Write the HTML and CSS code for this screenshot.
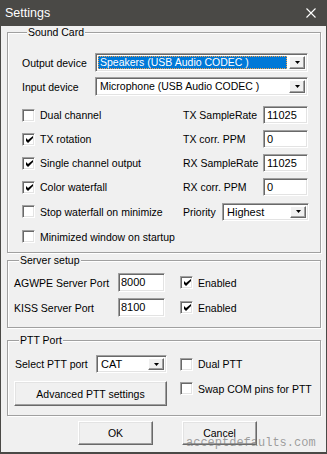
FILE: index.html
```html
<!DOCTYPE html>
<html>
<head>
  <title>Settings</title>
  <link rel="stylesheet" href="styles.css">
</head>
<body>
  <div class="window">
    <div class="titlebar">
      <span class="title">Settings</span>
      <svg class="close" width="10" height="10" viewBox="0 0 10 10">
        <path d="M0.5 0.5 L9.5 9.5 M9.5 0.5 L0.5 9.5" stroke="#ffffff" stroke-width="1.1" fill="none"/>
      </svg>
    </div>

    <div class="content">
      <fieldset class="group sound">
        <legend>Sound Card</legend>
        <div class="device-row">
          <span class="device-label">Output device</span>
          <div class="select focused">
            <span class="value"><span class="selected-text">Speakers (USB Audio CODEC )</span></span>
            <span class="drop"><svg width="5" height="3" viewBox="0 0 5 3"><path d="M0 0h5L2.5 3z" fill="#000"/></svg></span>
          </div>
        </div>
        <div class="device-row second">
          <span class="device-label">Input device</span>
          <div class="select">
            <span class="value">Microphone (USB Audio CODEC )</span>
            <span class="drop"><svg width="5" height="3" viewBox="0 0 5 3"><path d="M0 0h5L2.5 3z" fill="#000"/></svg></span>
          </div>
        </div>

        <div class="sound-grid">
          <label class="check"><span class="box"></span>Dual channel</label>
          <div class="field"><span>TX SampleRate</span><span class="input">11025</span></div>

          <label class="check"><span class="box checked"><svg width="7" height="7" viewBox="0 0 7 7"><path d="M0 2v3l2 2 5-5V-0L2 4z" fill="#000"/></svg></span>TX rotation</label>
          <div class="field"><span>TX corr. PPM</span><span class="input">0</span></div>

          <label class="check"><span class="box checked"><svg width="7" height="7" viewBox="0 0 7 7"><path d="M0 2v3l2 2 5-5V-0L2 4z" fill="#000"/></svg></span>Single channel output</label>
          <div class="field"><span>RX SampleRate</span><span class="input">11025</span></div>

          <label class="check"><span class="box checked"><svg width="7" height="7" viewBox="0 0 7 7"><path d="M0 2v3l2 2 5-5V-0L2 4z" fill="#000"/></svg></span>Color waterfall</label>
          <div class="field"><span>RX corr. PPM</span><span class="input">0</span></div>

          <label class="check"><span class="box"></span>Stop waterfall on minimize</label>
          <div class="field"><span>Priority</span>
            <div class="select priority">
              <span class="value">Highest</span>
              <span class="drop"><svg width="5" height="3" viewBox="0 0 5 3"><path d="M0 0h5L2.5 3z" fill="#000"/></svg></span>
            </div>
          </div>

          <label class="check wide"><span class="box"></span>Minimized window on startup</label>
        </div>
      </fieldset>

      <fieldset class="group server">
        <legend>Server setup</legend>
        <div class="server-row">
          <span class="server-label">AGWPE Server Port</span>
          <span class="input port">8000</span>
          <label class="check"><span class="box checked"><svg width="7" height="7" viewBox="0 0 7 7"><path d="M0 2v3l2 2 5-5V-0L2 4z" fill="#000"/></svg></span>Enabled</label>
        </div>
        <div class="server-row">
          <span class="server-label">KISS Server Port</span>
          <span class="input port">8100</span>
          <label class="check"><span class="box checked"><svg width="7" height="7" viewBox="0 0 7 7"><path d="M0 2v3l2 2 5-5V-0L2 4z" fill="#000"/></svg></span>Enabled</label>
        </div>
      </fieldset>

      <fieldset class="group ptt">
        <legend>PTT Port</legend>
        <div class="ptt-grid">
          <div class="ptt-select">
            <span>Select PTT port</span>
            <div class="select ptt-port">
              <span class="value">CAT</span>
              <span class="drop"><svg width="5" height="3" viewBox="0 0 5 3"><path d="M0 0h5L2.5 3z" fill="#000"/></svg></span>
            </div>
          </div>
          <label class="check"><span class="box"></span>Dual PTT</label>
          <button class="btn advanced">Advanced PTT settings</button>
          <label class="check swap"><span class="box"></span>Swap COM pins for PTT</label>
        </div>
      </fieldset>

      <div class="actions">
        <button class="btn">OK</button>
        <button class="btn">Cancel</button>
      </div>
    </div>

    <div class="watermark">acceptdefaults.com</div>
  </div>
</body>
</html>
```

FILE: styles.css
```css
:root {
  --face: #f0f0f0;
  --title: #4a4946;
  --shadow: #a0a0a0;
  --dark: #696969;
  --light: #e3e3e3;
  --highlight: #0078d7;
  --font: 'Liberation Sans', Arial, sans-serif;
}

* {
  box-sizing: border-box;
}

body {
  margin: 0;
  width: 327px;
  height: 454px;
  overflow: hidden;
  font-family: var(--font);
  font-size: 10.5px;
  color: #000;
}

.window {
  position: relative;
  width: 327px;
  height: 454px;
  background: var(--face);
  border: 1px solid var(--title);
  border-top: none;
  border-bottom-width: 2px;
}

.titlebar {
  height: 26px;
  margin: 0 -1px;
  background: var(--title);
  color: #fff;
  display: flex;
  align-items: center;
  justify-content: space-between;
  padding: 0 11px 0 5px;
}

.title {
  font-size: 12.5px;
}

.content {
  padding: 0 5px 0 6px;
}

/* Group boxes */
.group {
  margin: 0;
  border: 1px solid var(--shadow);
  box-shadow: inset 1px 1px 0 #fff, 1px 1px 0 #fff;
  padding: 0;
  min-width: 0;
}

.group legend {
  margin-left: 5px;
  padding: 0 1px;
  line-height: 13px;
  background: var(--face);
}

.sound {
  padding: 14px 12px 3px 14px;
}

.server {
  margin-top: 1px;
  padding: 6px 12px 10px 6px;
}

.ptt {
  margin-top: 6px;
  padding: 8px 12px 9px 6px;
}

/* Selects and inputs */
.select {
  display: flex;
  height: 19px;
  background: #fff;
  border: 1px solid;
  border-color: var(--shadow) #fff #fff var(--shadow);
  box-shadow: inset 1px 1px 0 var(--dark), inset -1px -1px 0 var(--light);
  padding: 2px;
}

.select .value {
  flex: 1;
  padding-left: 2px;
  line-height: 13px;
  white-space: nowrap;
  overflow: hidden;
}

.select .drop {
  width: 16px;
  height: 13px;
  background: var(--face);
  border: 1px solid;
  border-color: #fff var(--dark) var(--dark) #fff;
  box-shadow: inset -1px -1px 0 var(--shadow);
  display: flex;
  align-items: center;
  justify-content: center;
}

.select.focused .value {
  padding: 0;
  margin-right: 2px;
}

.selected-text {
  display: block;
  height: 13px;
  background: var(--highlight);
  color: #fff;
  padding-left: 2px;
  outline: 1px dotted #f7a24a;
  outline-offset: -1px;
}

.input {
  display: block;
  width: 45px;
  height: 18px;
  background: #fff;
  border: 1px solid;
  border-color: var(--shadow) #fff #fff var(--shadow);
  box-shadow: inset 1px 1px 0 var(--dark), inset -1px -1px 0 var(--light);
  padding: 2px 3px;
  line-height: 13px;
  font-size: 11px;
}

.device-row {
  display: flex;
  align-items: center;
}

.device-row.second {
  margin-top: 5px;
}

.device-label {
  width: 73px;
  flex: none;
}

.device-row .select {
  flex: 1;
}

/* Checkboxes */
.check {
  display: flex;
  align-items: center;
  gap: 5px;
  white-space: nowrap;
}

.box {
  width: 13px;
  height: 13px;
  flex: none;
  background: #fff;
  border: 1px solid;
  border-color: var(--shadow) #fff #fff var(--shadow);
  box-shadow: inset 1px 1px 0 var(--dark), inset -1px -1px 0 var(--light);
  display: flex;
  align-items: center;
  justify-content: center;
}

.box svg {
  margin-left: 1px;
}

.sound-grid {
  margin-top: 7px;
  display: grid;
  grid-template-columns: 161px 1fr;
  grid-template-rows: 24px 24px 24px 24px 25px 25px;
}

.field {
  display: flex;
  align-items: center;
  justify-content: space-between;
}

.priority {
  width: 87px;
  margin-right: -1px;
  height: 18px;
}

.priority .value {
  font-size: 11px;
}

.priority .drop {
  height: 12px;
}

/* Server setup */
.server-row {
  display: flex;
  align-items: center;
}

.server-row + .server-row {
  margin-top: 6px;
}

.server-label {
  width: 104px;
}

.port {
  width: 47px;
  height: 19px;
  padding-left: 2px;
}

.server-row .check {
  margin-left: 15px;
}

/* PTT */
.ptt-grid {
  display: grid;
  grid-template-columns: 153px 1fr;
  column-gap: 13px;
  row-gap: 8px;
}

.ptt-select {
  display: flex;
  align-items: center;
  justify-content: space-between;
  padding-left: 1px;
}

.ptt-port {
  width: 71px;
  height: 18px;
}

.ptt-port .value {
  font-size: 11px;
}

.ptt-port .drop {
  height: 12px;
}

.btn {
  font-family: var(--font);
  font-size: 10.5px;
  color: #000;
  background: var(--face);
  border: 1px solid;
  border-color: #fff var(--dark) var(--dark) #fff;
  box-shadow: inset -1px -1px 0 var(--shadow), inset 1px 1px 0 var(--light);
  padding: 0;
}

.advanced {
  height: 25px;
}

.swap {
  align-self: start;
  margin-top: 1px;
}

.actions {
  display: flex;
  gap: 29px;
  margin-top: 5px;
  padding-left: 71px;
}

.actions .btn {
  width: 75px;
  height: 24px;
}

.watermark {
  position: absolute;
  left: 185px;
  top: 436px;
  font-family: 'Liberation Mono', monospace;
  font-size: 12px;
  color: rgba(120, 120, 120, 0.7);
}
```
